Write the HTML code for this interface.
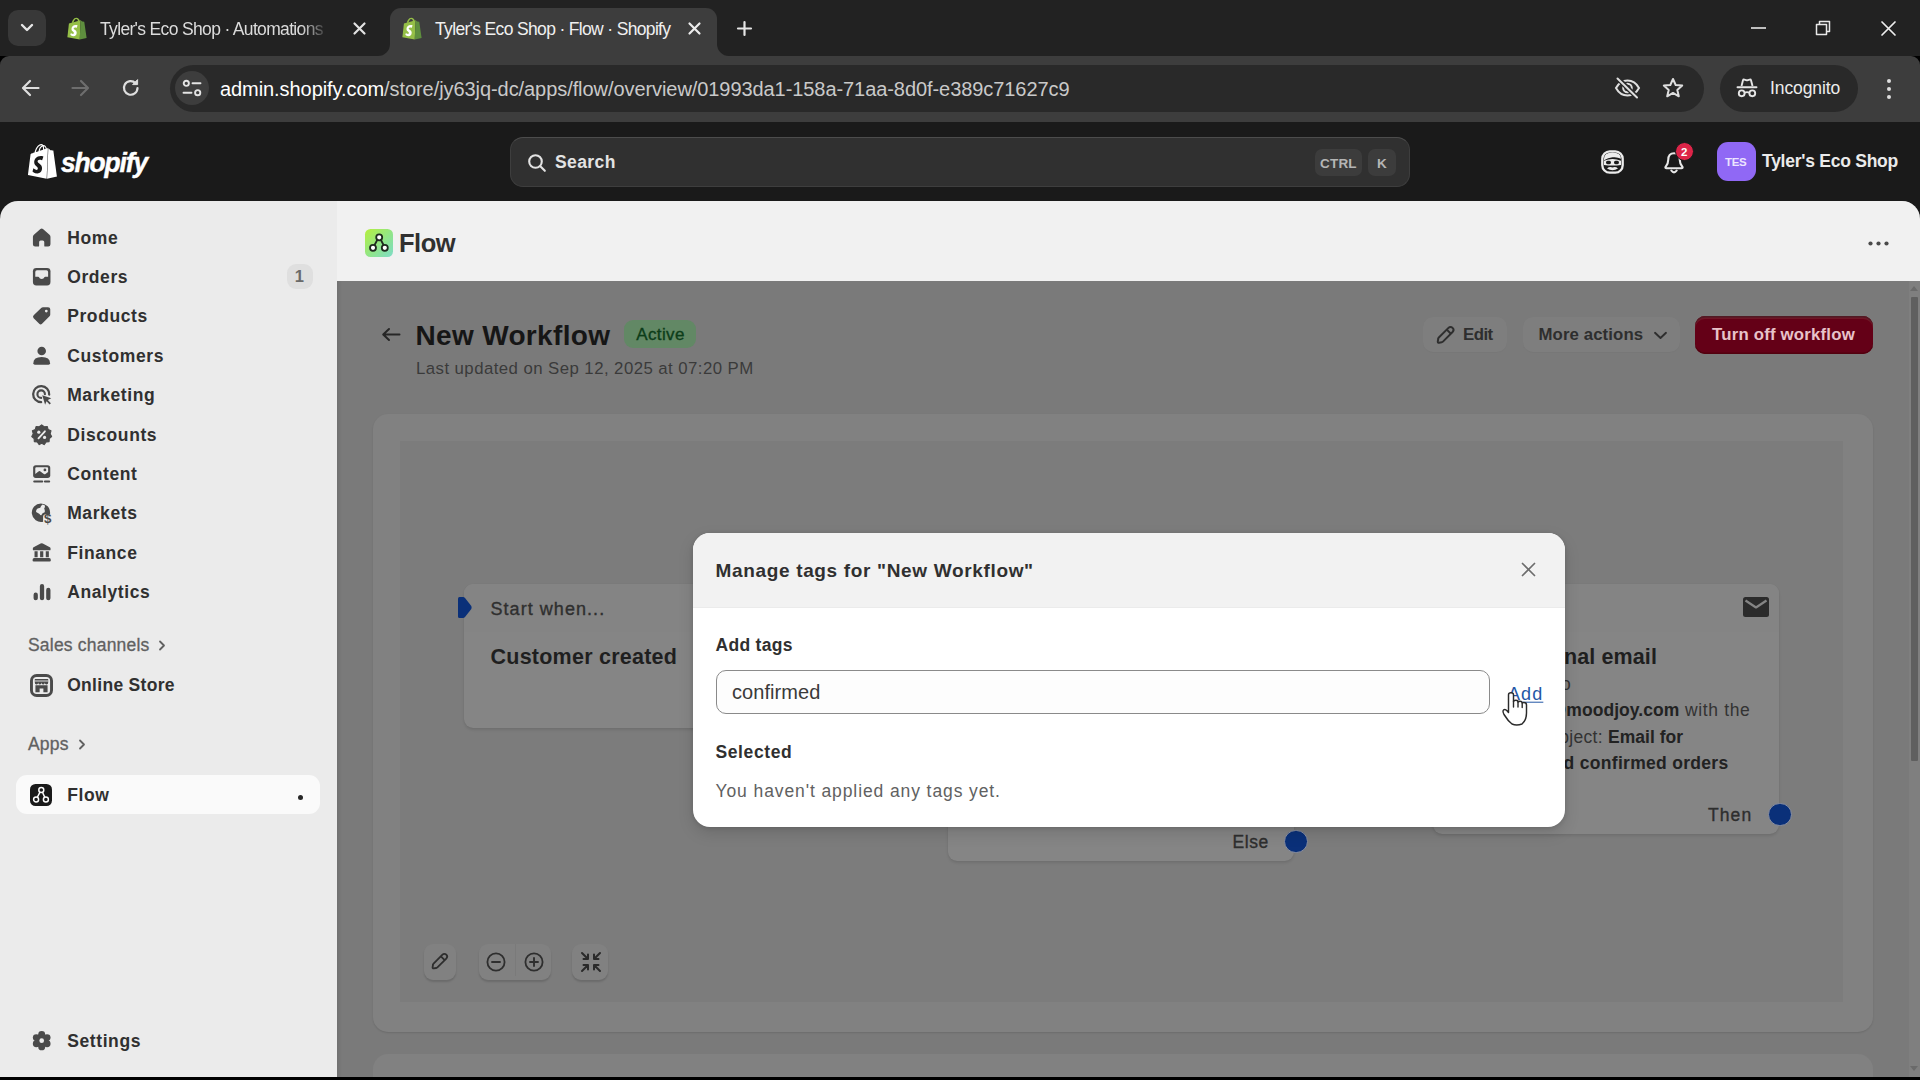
<!DOCTYPE html>
<html>
<head>
<meta charset="utf-8">
<title>Tyler's Eco Shop · Flow · Shopify</title>
<style>
*{box-sizing:border-box;margin:0;padding:0}
html,body{width:1920px;height:1080px;overflow:hidden;background:#000;font-family:"Liberation Sans",sans-serif;}
body{position:relative}
.abs{position:absolute}
.t{position:absolute;white-space:nowrap;line-height:1;transform:translateY(calc(-50% + .7px))}
svg{position:absolute;overflow:visible}
/* chrome */
#tabstrip{left:0;top:0;width:1920px;height:56px;background:#222}
#toolbar{left:0;top:56px;width:1920px;height:66px;background:#3d3d3d;border-top-left-radius:9px;border-top-right-radius:9px}
#topbar{left:0;top:122px;width:1920px;height:110px;background:#1a1a1a}
#sidebar{left:0;top:201px;width:337px;height:876px;background:#ebebeb;border-top-left-radius:18px}
#main{left:337px;top:201px;width:1583px;height:876px;background:#7a7a7a;border-top-right-radius:18px;overflow:hidden}
#mainhead{left:0;top:0;width:1583px;height:80px;background:#f1f1f1}
.nav{color:#303030;font-size:17.5px;font-weight:bold;left:67.200px;letter-spacing:.6px}
.sec{color:#616161;font-size:17.5px;left:28px;letter-spacing:.2px;-webkit-text-stroke:.3px #616161}
.med{-webkit-text-stroke:.35px currentColor}
</style>
</head>
<body>
<svg width="0" height="0" style="position:absolute"><defs>
<g id="shopbag">
<path d="M3.2 6.6 L15.9 2.9 L15 24 L1.5 21.5 Z" fill="#95bf47"/>
<path d="M15.9 2.9 L17.8 4.4 L19.9 4.6 L22.5 22.4 L15 24 Z" fill="#5e8e3e"/>
<path d="M11.2 .4 C8.2 .4 6.8 4 6.3 6 L8.2 5.5 C8.6 3.5 9.8 1.6 11.1 1.5 C12.4 1.5 13 3 13.1 4.2 L14.9 3.6 C14.5 2 13.4 .4 11.2 .4Z" fill="#95bf47"/>
<path d="M11.71 11.305s-.81-.424-1.774-.424c-1.447 0-1.504.906-1.504 1.141 0 1.232 3.24 1.715 3.24 4.629 0 2.295-1.44 3.76-3.406 3.76-2.354 0-3.54-1.465-3.54-1.465l.646-2.086s1.245 1.066 2.28 1.066c.675 0 .975-.545.975-.932 0-1.619-2.654-1.694-2.654-4.359-.034-2.237 1.571-4.416 4.827-4.416 1.257 0 1.875.361 1.875.361l-.945 2.715z" fill="#fff"/>
</g>
</defs></svg>
<!-- ============ CHROME TAB STRIP ============ -->
<div id="tabstrip" class="abs">
  <!-- tab search -->
  <div class="abs" style="left:8px;top:10px;width:38px;height:36px;border-radius:10px;background:#383838"></div>
  <svg style="left:20px;top:23px" width="14" height="10" viewBox="0 0 14 10"><path d="M2 2 L7 7 L12 2" fill="none" stroke="#e6e6e6" stroke-width="2.4" stroke-linecap="round" stroke-linejoin="round"/></svg>
  <!-- tab 1 -->
  <svg class="fav" style="left:66px;top:17px" width="22" height="23" viewBox="0 0 24 24"><use href="#shopbag"/></svg>
  <div class="t" style="left:100px;top:29px;font-size:17.5px;color:#dcdcdc;width:229px;overflow:hidden;letter-spacing:-.66px;-webkit-mask-image:linear-gradient(90deg,#000 88%,transparent 100%)">Tyler's Eco Shop · Automations</div>
  <svg style="left:353px;top:22px" width="13" height="13" viewBox="0 0 13 13"><path d="M1.5 1.5 L11.5 11.5 M11.5 1.5 L1.5 11.5" stroke="#e2e2e2" stroke-width="2.2" stroke-linecap="round"/></svg>
  <!-- tab 2 active -->
  <div class="abs" style="left:390px;top:8px;width:327px;height:48px;background:#3d3d3d;border-radius:11px 11px 0 0"></div>
  <svg style="left:378px;top:44px" width="12" height="12" viewBox="0 0 12 12"><path d="M12 0 V12 H0 A12 12 0 0 0 12 0Z" fill="#3d3d3d"/></svg>
  <svg style="left:717px;top:44px" width="12" height="12" viewBox="0 0 12 12"><path d="M0 0 V12 H12 A12 12 0 0 1 0 0Z" fill="#3d3d3d"/></svg>
  <svg class="fav" style="left:401px;top:17px" width="22" height="23" viewBox="0 0 24 24"><use href="#shopbag"/></svg>
  <div class="t" style="left:435px;top:29px;font-size:17.5px;color:#f0f0f0;letter-spacing:-.66px">Tyler's Eco Shop · Flow · Shopify</div>
  <svg style="left:688px;top:22px" width="13" height="13" viewBox="0 0 13 13"><path d="M1.5 1.5 L11.5 11.5 M11.5 1.5 L1.5 11.5" stroke="#ececec" stroke-width="2.2" stroke-linecap="round"/></svg>
  <!-- new tab -->
  <svg style="left:737px;top:21px" width="15" height="15" viewBox="0 0 15 15"><path d="M7.5 1 V14 M1 7.5 H14" stroke="#e6e6e6" stroke-width="2.2" stroke-linecap="round"/></svg>
  <!-- window controls -->
  <svg style="left:1751px;top:27px" width="15" height="2" viewBox="0 0 15 2"><path d="M0 1 H15" stroke="#e8e8e8" stroke-width="1.6"/></svg>
  <svg style="left:1815px;top:20px" width="16" height="16" viewBox="0 0 16 16"><path d="M1.5 4.5 H11.5 V14.5 H1.5 Z M4.5 4.5 V1.5 H14.5 V11.5 H11.5" fill="none" stroke="#e8e8e8" stroke-width="1.5" stroke-linejoin="round"/></svg>
  <svg style="left:1881px;top:21px" width="15" height="15" viewBox="0 0 15 15"><path d="M1 1 L14 14 M14 1 L1 14" stroke="#eeeeee" stroke-width="1.7" stroke-linecap="round"/></svg>
</div>
<!-- ============ CHROME TOOLBAR ============ -->
<div id="toolbar" class="abs">
  <!-- back -->
  <svg style="left:21px;top:23px" width="19" height="18" viewBox="0 0 19 18"><path d="M17.5 9 H2.5 M9 2 L2 9 L9 16" fill="none" stroke="#dedede" stroke-width="2.2" stroke-linecap="round" stroke-linejoin="round"/></svg>
  <!-- forward (disabled) -->
  <svg style="left:71px;top:23px" width="19" height="18" viewBox="0 0 19 18"><path d="M1.5 9 H16.5 M10 2 L17 9 L10 16" fill="none" stroke="#6e6e6e" stroke-width="2.2" stroke-linecap="round" stroke-linejoin="round"/></svg>
  <!-- reload -->
  <svg style="left:121px;top:22px" width="20" height="20" viewBox="0 0 20 20"><path d="M16.5 10 A6.8 6.8 0 1 1 14.6 5.2" fill="none" stroke="#dedede" stroke-width="2.2" stroke-linecap="round"/><path d="M11.6 6.6 H16.6 V1.6 Z" fill="#dedede" stroke="#dedede" stroke-width="1" stroke-linejoin="round"/></svg>
  <!-- omnibox -->
  <div class="abs" style="left:170px;top:8.500px;width:1534px;height:47px;border-radius:23.500px;background:#292929"></div>
  <div class="abs" style="left:175px;top:15px;width:34px;height:34px;border-radius:17px;background:#3d3d3d"></div>
  <svg style="left:182px;top:23px" width="20" height="18" viewBox="0 0 20 18"><circle cx="4.3" cy="4.3" r="2.6" fill="none" stroke="#e4e4e4" stroke-width="1.9"/><path d="M10.5 4.3 H18.5" stroke="#e4e4e4" stroke-width="1.9" stroke-linecap="round"/><circle cx="15.7" cy="13.7" r="2.6" fill="none" stroke="#e4e4e4" stroke-width="1.9"/><path d="M1.5 13.7 H9.5" stroke="#e4e4e4" stroke-width="1.9" stroke-linecap="round"/></svg>
  <div class="t" style="left:220px;top:32px;font-size:20px;color:#c9c9c9;letter-spacing:-.07px"><span style="color:#fff">admin.shopify.com</span>/store/jy63jq-dc/apps/flow/overview/01993da1-158a-71aa-8d0f-e389c71627c9</div>
  <!-- eye off -->
  <svg style="left:1614px;top:21px" width="27" height="22" viewBox="0 0 27 22"><path d="M2 11 C5 5.5 9 3.5 13.5 3.5 C18 3.5 22 5.500 25 11 C22 16.5 18 18.5 13.500 18.5 C9 18.5 5 16.5 2 11 Z" fill="none" stroke="#dedede" stroke-width="2"/><circle cx="13.5" cy="11" r="4.300" fill="none" stroke="#dedede" stroke-width="2"/><path d="M4 1.500 L23 20.500" stroke="#292929" stroke-width="5"/><path d="M3.5 1.500 L23 20.500" stroke="#dedede" stroke-width="2" stroke-linecap="round"/></svg>
  <!-- star -->
  <svg style="left:1662px;top:21px" width="22" height="21" viewBox="0 0 22 21"><path d="M11 2 L13.7 8 L20.2 8.600 L15.3 12.900 L16.800 19.300 L11 15.900 L5.200 19.300 L6.700 12.900 L1.800 8.600 L8.300 8 Z" fill="none" stroke="#dedede" stroke-width="2" stroke-linejoin="round"/></svg>
  <!-- incognito pill -->
  <div class="abs" style="left:1720px;top:8.500px;width:138px;height:47px;border-radius:23.500px;background:#292929"></div>
  <svg style="left:1736px;top:21px" width="22" height="22" viewBox="0 0 22 22"><path d="M5.500 9 L7 3.300 Q7.300 2.300 8.300 2.600 L11 3.400 L13.700 2.600 Q14.700 2.300 15 3.300 L16.500 9" fill="none" stroke="#e6e6e6" stroke-width="1.9" stroke-linejoin="round"/><path d="M1.500 10.200 H20.500" stroke="#e6e6e6" stroke-width="1.9" stroke-linecap="round"/><circle cx="5.700" cy="16.300" r="2.900" fill="none" stroke="#e6e6e6" stroke-width="1.9"/><circle cx="16.300" cy="16.300" r="2.900" fill="none" stroke="#e6e6e6" stroke-width="1.900"/><path d="M8.600 15.800 Q11 14.400 13.400 15.800" fill="none" stroke="#e6e6e6" stroke-width="1.800"/></svg>
  <div class="t" style="left:1770px;top:32px;font-size:17.5px;color:#ececec;letter-spacing:-.1px">Incognito</div>
  <!-- menu dots -->
  <svg style="left:1886px;top:22px" width="6" height="22" viewBox="0 0 6 22"><circle cx="3" cy="3" r="2" fill="#dedede"/><circle cx="3" cy="11" r="2" fill="#dedede"/><circle cx="3" cy="19" r="2" fill="#dedede"/></svg>
</div>
<!-- ============ SHOPIFY TOPBAR ============ -->
<div id="topbar" class="abs">
  <!-- logo -->
  <svg style="left:26px;top:22.300px" width="33" height="34.700" viewBox="0 0 24 24" preserveAspectRatio="none"><path fill="#fff" d="M15.337 23.979l7.216-1.561s-2.604-17.613-2.625-17.730c-.018-.116-.114-.192-.211-.192s-1.929-.136-1.929-.136-1.275-1.274-1.439-1.411c-.045-.037-.075-.057-.121-.074l-.914 21.104h.023zM11.710 11.305s-.810-.424-1.774-.424c-1.447 0-1.504.906-1.504 1.141 0 1.232 3.240 1.715 3.240 4.629 0 2.295-1.440 3.760-3.406 3.760-2.354 0-3.540-1.465-3.540-1.465l.646-2.086s1.245 1.066 2.280 1.066c.675 0 .975-.545.975-.932 0-1.619-2.654-1.694-2.654-4.359-.034-2.237 1.571-4.416 4.827-4.416 1.257 0 1.875.361 1.875.361l-.945 2.715-.020.010zM11.170.830c.136 0 .271.038.405.135-.984.465-2.064 1.639-2.508 3.992-.656.213-1.293.405-1.889.578C7.697 3.757 8.951.830 11.170.830zm1.235 2.949v.135c-.754.232-1.583.484-2.394.736.466-1.777 1.333-2.645 2.085-2.971.193.501.309 1.176.309 2.100zm.539-2.234c.694.074 1.141.867 1.429 1.755-.349.114-.735.231-1.158.366v-.252c0-.752-.096-1.371-.271-1.871v.002zm2.992 1.289c-.020 0-.060.021-.078.021s-.289.075-.714.210c-.423-1.233-1.176-2.370-2.508-2.370h-.115C12.135.209 11.669 0 11.265 0 8.159 0 6.675 3.877 6.210 5.846c-1.194.365-2.063.636-2.160.674-.675.213-.694.232-.772.870-.075.462-1.830 14.063-1.830 14.063L15.009 24l.927-21.166z"/></svg>
  <div class="t" style="left:61px;top:39.500px;font-size:28.500px;font-weight:bold;font-style:italic;color:#fff;letter-spacing:-1.2px;-webkit-text-stroke:.5px #fff;transform:translateY(calc(-50% + .7px)) scaleX(.925);transform-origin:left center">shopify</div>
  <!-- search -->
  <div class="abs" style="left:510px;top:15px;width:900px;height:50px;border-radius:13px;background:#303030;border:1px solid #3e3e3e;border-top-color:#4c4c4c"></div>
  <svg style="left:527px;top:31px" width="20" height="20" viewBox="0 0 20 20"><circle cx="8.500" cy="8.500" r="6.300" fill="none" stroke="#e3e3e3" stroke-width="2.100"/><path d="M13.300 13.300 L17.800 17.800" stroke="#e3e3e3" stroke-width="2.100" stroke-linecap="round"/></svg>
  <div class="t" style="left:555px;top:40px;font-size:17.5px;font-weight:bold;color:#e3e3e3;letter-spacing:.4px">Search</div>
  <div class="abs" style="left:1315px;top:27px;width:47px;height:27px;border-radius:7px;background:#3c3c3c"></div>
  <div class="t" style="left:1320px;top:41px;font-size:13.5px;font-weight:bold;color:#b5b5b5;letter-spacing:.2px">CTRL</div>
  <div class="abs" style="left:1368px;top:27px;width:28px;height:27px;border-radius:7px;background:#3c3c3c"></div>
  <div class="t" style="left:1377px;top:41px;font-size:13.5px;font-weight:bold;color:#b5b5b5">K</div>
  <!-- sidekick -->
  <svg style="left:1601px;top:27px" width="23" height="25" viewBox="0 0 23 25"><rect x="1.300" y="2.300" width="20.400" height="21.400" rx="7.500" fill="#1a1a1a" stroke="#ececec" stroke-width="2.300"/><path d="M3 9.800 Q3 3.500 11.500 3.500 Q20 3.500 20 9.800 Q16 7.600 11.500 8.300 Q7 9 3 11.200Z" fill="#ececec"/><path d="M3 11.800 Q11.500 8.300 20 11.800 V16 Q11.500 17 3 16Z" fill="#ececec"/><rect x="5" y="11.800" width="5" height="3.400" rx="1.600" fill="#1a1a1a"/><rect x="13" y="11.800" width="5" height="3.400" rx="1.600" fill="#1a1a1a"/><path d="M6 19.500 Q8.500 17.200 11.500 18.500 Q14.500 17.200 17 19.500 Q11.500 22.800 6 19.500Z" fill="#ececec"/></svg>
  <!-- bell -->
  <svg style="left:1663px;top:29px" width="22" height="24" viewBox="0 0 22 24"><path d="M11 2.200 C7.200 2.200 5.300 5 5.300 8.500 C5.300 12.500 4 14 2.500 16 Q2 17.300 3.500 17.300 H18.500 Q20 17.300 19.500 16 C18 14 16.700 12.500 16.700 8.500 C16.700 5 14.800 2.200 11 2.200Z" fill="none" stroke="#e8e8e8" stroke-width="2.100" stroke-linejoin="round"/><path d="M8.300 19.500 Q11 23.300 13.700 19.500" fill="none" stroke="#e8e8e8" stroke-width="2.100" stroke-linecap="round"/></svg>
  <div class="abs" style="left:1675px;top:20px;width:19px;height:19px;border-radius:10px;background:#dd2448;border:1.500px solid #1a1a1a"></div>
  <div class="t" style="left:1681px;top:30px;font-size:11.500px;font-weight:bold;color:#fff">2</div>
  <!-- avatar -->
  <div class="abs" style="left:1717px;top:20px;width:39px;height:39px;border-radius:11px;background:#9068f5"></div>
  <div class="t" style="left:1725px;top:40px;font-size:11.500px;font-weight:bold;color:#ece4ff;letter-spacing:-.3px">TES</div>
  <div class="t" style="left:1762px;top:39px;font-size:17.500px;font-weight:bold;color:#ebebeb;letter-spacing:-.25px">Tyler's Eco Shop</div>
</div>
<!-- ============ SIDEBAR ============ -->
<div id="sidebar" class="abs">
  <svg style="left:31.400px;top:26.3px" width="21.400" height="21.400" viewBox="0 0 20 20"><path d="M10 1.300 Q10.600 1.300 11.200 1.800 L17.300 7.200 Q18.200 8 18.200 9.200 V16.200 Q18.200 18.300 16.100 18.300 H13.200 Q12.400 18.300 12.400 17.500 V14 Q12.400 12.600 11 12.600 H9 Q7.600 12.600 7.600 14 V17.500 Q7.600 18.300 6.800 18.300 H3.900 Q1.800 18.300 1.800 16.200 V9.200 Q1.800 8 2.700 7.200 L8.800 1.800 Q9.400 1.300 10 1.300Z" fill="#4a4a4a"/></svg>
  <div class="t nav" style="top:37px">Home</div>
  <svg style="left:31.400px;top:65.3px" width="21.400" height="21.400" viewBox="0 0 20 20"><path d="M5 1.800 H15 Q18.200 1.800 18.200 5 V15 Q18.200 18.200 15 18.200 H5 Q1.800 18.200 1.800 15 V5 Q1.800 1.800 5 1.800Z" fill="#4a4a4a"/><path d="M5.600 4 H14.400 Q16 4 16 5.600 V10 H13.300 Q12.700 10 12.500 10.600 Q12 12.200 10 12.200 Q8 12.200 7.500 10.600 Q7.300 10 6.700 10 H4 V5.600 Q4 4 5.600 4Z" fill="#ebebeb"/></svg>
  <div class="t nav" style="top:76px">Orders</div>
  <svg style="left:31.400px;top:104.3px" width="21.400" height="21.400" viewBox="0 0 20 20"><path d="M11.200 2 H16 Q18 2 18 4 V8.800 Q18 9.800 17.300 10.500 L10.300 17.500 Q9 18.800 7.700 17.500 L2.500 12.300 Q1.200 11 2.500 9.700 L9.500 2.700 Q10.200 2 11.200 2Z" fill="#4a4a4a"/><circle cx="14.300" cy="5.700" r="1.300" fill="#ebebeb"/></svg>
  <div class="t nav" style="top:115px">Products</div>
  <svg style="left:31.400px;top:144.3px" width="21.400" height="21.400" viewBox="0 0 20 20"><circle cx="10" cy="5.600" r="4" fill="#4a4a4a"/><path d="M2.200 17 Q2.200 11.300 10 11.300 Q17.800 11.300 17.800 17 Q17.800 18.400 16.400 18.400 H3.600 Q2.200 18.400 2.200 17Z" fill="#4a4a4a"/></svg>
  <div class="t nav" style="top:155px">Customers</div>
  <svg style="left:31.400px;top:183.3px" width="21.400" height="21.400" viewBox="0 0 20 20"><path d="M17 10 A7.500 7.500 0 1 0 9.500 17" fill="none" stroke="#4a4a4a" stroke-width="2.100" stroke-linecap="round"/><path d="M13 9.500 A3.500 3.500 0 1 0 9.500 13" fill="none" stroke="#4a4a4a" stroke-width="2" stroke-linecap="round"/><path d="M10.500 10.500 L19 13.400 L15.700 15 L18.600 18 L17.400 19.200 L14.500 16.200 L13.200 19.300 Z" fill="#4a4a4a"/></svg>
  <div class="t nav" style="top:194px">Marketing</div>
  <svg style="left:31.400px;top:223.3px" width="21.400" height="21.400" viewBox="0 0 20 20"><path d="M10 .8 L12.300 2.600 L15.200 2.300 L16 5.100 L18.700 6.300 L17.900 9.100 L19.300 11.700 L17.100 13.600 L16.900 16.500 L14 16.900 L12.300 19.300 L10 18 L7.700 19.300 L6 16.900 L3.100 16.500 L2.900 13.600 L.7 11.700 L2.100 9.100 L1.300 6.300 L4 5.100 L4.800 2.300 L7.700 2.600 Z" fill="#4a4a4a" stroke="#4a4a4a" stroke-width="1" stroke-linejoin="round"/><circle cx="7.300" cy="7.600" r="1.500" fill="#ebebeb"/><circle cx="12.700" cy="12.600" r="1.500" fill="#ebebeb"/><path d="M13 6.800 L7 13.400" stroke="#ebebeb" stroke-width="1.700" stroke-linecap="round"/></svg>
  <div class="t nav" style="top:234px">Discounts</div>
  <svg style="left:31.400px;top:262.3px" width="21.400" height="21.400" viewBox="0 0 20 20"><path d="M4.500 2 H15.500 Q18 2 18 4.500 V11.500 Q18 14 15.500 14 H4.500 Q2 14 2 11.500 V4.500 Q2 2 4.500 2Z" fill="#4a4a4a"/><path d="M5 4 H15 Q16 4 16 5 V8.500 L13.500 10.200 Q12.800 10.700 12 10.200 L8.500 7.800 Q7.700 7.300 7 7.900 L4 10.300 V5 Q4 4 5 4Z" fill="#ebebeb"/><circle cx="13" cy="6.500" r="1.300" fill="#4a4a4a"/><path d="M3 17.300 H10.500 M13 17.300 H17" stroke="#4a4a4a" stroke-width="1.900" stroke-linecap="round"/></svg>
  <div class="t nav" style="top:273px">Content</div>
  <svg style="left:31.400px;top:301.3px" width="21.400" height="21.400" viewBox="0 0 20 20"><path d="M9.300 1.300 A8.700 8.700 0 1 0 11.300 18.500 V14 Q11.300 11.500 14 11.500 H17.800 Q18.300 7 15.600 4 Q12.800 1.300 9.300 1.300Z" fill="#4a4a4a"/><path d="M10.800 2.300 Q9 3.600 8.700 5.400 L6.200 6 Q4.400 7.300 4.800 9.300 L8 11.200 Q8.300 12.300 9.600 12.400 Q10.500 10.300 12.800 9.600 Q13.200 7.500 12.300 6 Q13.500 4.800 12.800 3 Z" fill="#ebebeb"/><text x="12.200" y="19.800" font-family="Liberation Sans" font-weight="bold" font-size="12.500" fill="#4a4a4a">$</text></svg>
  <div class="t nav" style="top:312px">Markets</div>
  <svg style="left:31.400px;top:341.3px" width="21.400" height="21.400" viewBox="0 0 20 20"><path d="M10 1.200 Q10.500 1.200 11 1.500 L17.600 5 Q18.300 5.400 18.300 6.200 V7 Q18.300 7.800 17.500 7.800 H2.500 Q1.700 7.800 1.700 7 V6.200 Q1.700 5.400 2.400 5 L9 1.500 Q9.500 1.200 10 1.200Z" fill="#4a4a4a"/><path d="M3.300 8.600 H6.200 V14.300 H3.300Z M8.500 8.600 H11.500 V14.300 H8.500Z M13.800 8.600 H16.700 V14.300 H13.800Z" fill="#4a4a4a"/><path d="M3 15 H17 Q18.500 15 18.500 16.500 V17.300 Q18.500 18.300 17.500 18.300 H2.500 Q1.500 18.300 1.500 17.300 V16.500 Q1.500 15 3 15Z" fill="#4a4a4a"/></svg>
  <div class="t nav" style="top:352px">Finance</div>
  <svg style="left:31.400px;top:380.3px" width="21.400" height="21.400" viewBox="0 0 20 20"><path d="M4.400 12.800 V16.100 M10.300 4.800 V16.100 M16.200 8.300 V16.100" stroke="#4a4a4a" stroke-width="4" stroke-linecap="round"/></svg>
  <div class="t nav" style="top:391px">Analytics</div>
  <div class="abs" style="left:286.500px;top:63px;width:26px;height:24.500px;border-radius:9px;background:#dfdfdf"></div>
  <div class="t" style="left:294.800px;top:75px;font-size:16.500px;font-weight:bold;color:#6a6a6a">1</div>
  <div class="t sec" style="top:444px">Sales channels</div>
  <svg style="left:158px;top:439px" width="8" height="11" viewBox="0 0 8 11"><path d="M2 1.500 L6 5.500 L2 9.500" fill="none" stroke="#616161" stroke-width="1.800" stroke-linecap="round" stroke-linejoin="round"/></svg>
  <svg style="left:30px;top:472.500px" width="23" height="23" viewBox="0 0 22 22"><rect x="1.400" y="1.400" width="19.200" height="19.200" rx="5" fill="none" stroke="#4a4a4a" stroke-width="2.800"/><path d="M4.600 4.800 H17.400 V8.200 Q17.400 10 15.800 10 Q14.200 10 14.200 8.200 Q14.200 10 12.600 10 Q11 10 11 8.200 Q11 10 9.400 10 Q7.800 10 7.800 8.200 Q7.800 10 6.200 10 Q4.600 10 4.600 8.200Z" fill="#4a4a4a"/><path d="M5.200 10.800 H16.800 V17.400 H12.800 V13.800 H9.200 V17.400 H5.200Z" fill="#4a4a4a"/><path d="M4.600 6.700 H17.400" stroke="#ebebeb" stroke-width=".9"/></svg>
  <div class="t nav" style="top:484px;letter-spacing:.3px">Online Store</div>
  <div class="t sec" style="top:543px">Apps</div>
  <svg style="left:78px;top:538px" width="8" height="11" viewBox="0 0 8 11"><path d="M2 1.500 L6 5.500 L2 9.500" fill="none" stroke="#616161" stroke-width="1.800" stroke-linecap="round" stroke-linejoin="round"/></svg>
  <div class="abs" style="left:16px;top:574px;width:304px;height:39px;border-radius:11px;background:#fafafa"></div>
  <svg style="left:30px;top:583px" width="22" height="22" viewBox="0 0 22 22"><rect x="0" y="0" width="22" height="22" rx="5.500" fill="#1a1a1a"/><g fill="none" stroke="#fff" stroke-width="1.450"><circle cx="11.300" cy="6" r="2.500"/><circle cx="6.100" cy="15.500" r="2.500"/><circle cx="15.900" cy="15.500" r="2.500"/><path d="M10 8.200 L7.400 13.200 M12.500 8.300 L14.700 13.100"/></g></svg>
  <div class="t nav" style="top:594px">Flow</div>
  <div class="abs" style="left:297.500px;top:593.500px;width:5px;height:5px;border-radius:3px;background:#262626"></div>
  <svg style="left:30.800px;top:828.600px" width="21.400" height="21.400" viewBox="0 0 21 21"><g fill="#4a4a4a"><circle cx="10.500" cy="10.500" r="6.800"/><circle cx="10.50" cy="4.40" r="3.400"/><circle cx="5.22" cy="7.45" r="3.400"/><circle cx="5.22" cy="13.55" r="3.400"/><circle cx="10.50" cy="16.60" r="3.400"/><circle cx="15.78" cy="13.55" r="3.400"/><circle cx="15.78" cy="7.45" r="3.400"/></g><circle cx="10.500" cy="10.500" r="2.300" fill="#ebebeb"/></svg>
  <div class="t nav" style="top:840px">Settings</div>
</div>
<!-- ============ MAIN ============ -->
<div id="main" class="abs">
  <div id="mainhead" class="abs"></div>
  <div class="abs" style="left:0;top:80px;width:5px;height:800px;background:linear-gradient(90deg,#707070,#7a7a7a)"></div>
  <svg style="left:28px;top:28px" width="28" height="28" viewBox="0 0 28 28"><defs><linearGradient id="fg" x1="0" y1="0" x2="1" y2="1"><stop offset="0" stop-color="#b5ef3e"/><stop offset=".55" stop-color="#90e58a"/><stop offset="1" stop-color="#7edcc8"/></linearGradient></defs><rect width="28" height="28" rx="5.500" fill="url(#fg)"/><g fill="#fff" stroke="#1f2a1f" stroke-width="1.800"><path d="M12.500 10.500 L9.300 16.500 M15.700 10.500 L18.500 16" fill="none"/><circle cx="14.200" cy="8.300" r="3"/><circle cx="8" cy="18.800" r="3"/><circle cx="19.800" cy="18.800" r="3"/></g></svg>
  <div class="t" style="left:62px;top:42px;font-size:25.500px;font-weight:bold;color:#303030;letter-spacing:-.5px">Flow</div>
  <svg style="left:1531px;top:40px" width="21" height="5" viewBox="0 0 21 5"><circle cx="2.500" cy="2.500" r="2.100" fill="#4a4a4a"/><circle cx="10.500" cy="2.500" r="2.100" fill="#4a4a4a"/><circle cx="18.500" cy="2.500" r="2.100" fill="#4a4a4a"/></svg>
  <svg style="left:44px;top:126px" width="20" height="15" viewBox="0 0 20 15"><path d="M18.500 7.500 H2.500 M8 2 L2.200 7.500 L8 13" fill="none" stroke="#262626" stroke-width="2" stroke-linecap="round" stroke-linejoin="round"/></svg>
  <div class="t" style="left:78.5px;top:133.5px;font-size:28px;font-weight:bold;color:#161616;letter-spacing:.33px">New Workflow</div>
  <div class="abs" style="left:286.8px;top:118.700px;width:72.500px;height:28.600px;border-radius:9px;background:#628865"></div>
  <div class="t med" style="left:299.300px;top:132.900px;font-size:17px;color:#0c3d19;letter-spacing:.35px">Active</div>
  <div class="t" style="left:79px;top:167.5px;font-size:16.800px;color:#3a3a3a;letter-spacing:.44px">Last updated on Sep 12, 2025 at 07:20 PM</div>
  <div class="abs" style="left:1086px;top:116px;width:84px;height:36px;border-radius:10px;background:#7e7e7e;box-shadow:inset 0 -1px 0 #777"></div>
  <svg style="left:1098px;top:123.500px" width="20.500" height="20.500" viewBox="0 0 19 19"><g transform="rotate(45 9.500 9.500)" fill="none" stroke="#2e2e2e" stroke-width="1.800" stroke-linejoin="round"><path d="M6.800 2.600 A2.700 2.700 0 0 1 12.200 2.600 V15.200 Q12.200 15.900 11.800 16.400 L10.300 18.500 Q9.500 19.400 8.700 18.500 L7.200 16.400 Q6.800 15.900 6.800 15.200 Z"/><path d="M6.800 4.800 H12.200"/></g></svg>
  <div class="t" style="left:1126px;top:133.5px;font-size:16.800px;font-weight:bold;color:#2e2e2e;letter-spacing:-.5px">Edit</div>
  <div class="abs" style="left:1186px;top:116px;width:157px;height:36px;border-radius:10px;background:#7e7e7e;box-shadow:inset 0 -1px 0 #777"></div>
  <div class="t" style="left:1201.5px;top:133.5px;font-size:16.800px;font-weight:bold;color:#2e2e2e;letter-spacing:.1px">More actions</div>
  <svg style="left:1316px;top:130px" width="15" height="9" viewBox="0 0 15 9"><path d="M2 1.800 L7.500 7 L13 1.800" fill="none" stroke="#2e2e2e" stroke-width="1.900" stroke-linecap="round" stroke-linejoin="round"/></svg>
  <div class="abs" style="left:1357.5px;top:114.5px;width:178.500px;height:38.500px;border-radius:10px;background:#640017;box-shadow:inset 0 1.500px 0 #511a24, inset 0 3px 0 #6f1626, inset 0 -1.500px 0 #52010f"></div>
  <div class="t" style="left:1375px;top:133.5px;font-size:16.800px;font-weight:bold;color:#e8c3ca;letter-spacing:.2px">Turn off workflow</div>
  <div class="abs" style="left:35.5px;top:213px;width:1500px;height:618px;border-radius:15px;background:#818181;box-shadow:0 1px 2px rgba(0,0,0,.12)"></div>
  <div class="abs" id="canvas" style="left:63px;top:239.5px;width:1443px;height:561.500px;background:#7c7c7c"></div>
  <div class="abs" style="left:127px;top:382.5px;width:346px;height:144px;border-radius:9px;background:#858585;box-shadow:0 2px 3px rgba(0,0,0,.10),0 0 1px rgba(0,0,0,.08)"></div>
  <div class="abs" style="left:127px;top:382.5px;width:346px;height:48px;border-radius:9px 9px 0 0;background:#848484"></div>
  <svg style="left:120.5px;top:395.5px" width="14" height="21" viewBox="0 0 14 21"><path d="M1.500 0 H5 Q6.200 0 7 .9 L13.300 9 Q14 10.500 13.300 12 L7 20.100 Q6.200 21 5 21 H1.500 Q0 21 0 19.500 V1.500 Q0 0 1.500 0Z" fill="#0a3079"/></svg>
  <div class="t med" style="left:153.5px;top:406.5px;font-size:18px;color:#2f2f2f;letter-spacing:1.05px">Start when...</div>
  <div class="t" style="left:153.5px;top:455.5px;font-size:21.500px;font-weight:bold;color:#1f1f1f;letter-spacing:.24px">Customer created</div>
  <div class="abs" style="left:611px;top:359px;width:346px;height:301px;border-radius:9px;background:#858585;box-shadow:0 2px 3px rgba(0,0,0,.10),0 0 1px rgba(0,0,0,.08)"></div>
  <div class="t med" style="left:895.5px;top:640.5px;font-size:17.500px;color:#2e2e2e;letter-spacing:.6px">Else</div>
  <div class="abs" style="left:947.3px;top:628.7px;width:23.500px;height:23.500px;border-radius:13px;background:#0a3079;border:1.500px solid #8b90a0"></div>
  <div class="abs" style="left:1096px;top:382.5px;width:346px;height:250px;border-radius:9px;background:#858585;box-shadow:0 2px 3px rgba(0,0,0,.10),0 0 1px rgba(0,0,0,.08)"></div>
  <div class="abs" style="left:1096px;top:382.5px;width:346px;height:48px;border-radius:9px 9px 0 0;background:#848484"></div>
  <svg style="left:1405.5px;top:396px" width="26" height="20" viewBox="0 0 26 20"><path d="M2.500 0 H23.500 Q26 0 26 2.500 V17.500 Q26 20 23.500 20 H2.500 Q0 20 0 17.500 V2.500 Q0 0 2.500 0Z" fill="#2b2b2b"/><path d="M2.500 3.500 L13 10.500 L23.500 3.500" fill="none" stroke="#858585" stroke-width="2.200" stroke-linejoin="round"/></svg>
  <div class="t" style="right:263px;top:455.5px;font-size:21.500px;font-weight:bold;color:#1f1f1f;letter-spacing:.1px">Send internal email</div>
  <div class="t" style="right:349px;top:483px;font-size:17.500px;color:#333;letter-spacing:.3px">Send email to</div>
  <div class="t" style="right:169.5px;top:509px;font-size:17.500px;color:#333;letter-spacing:.3px"><b style="color:#222;letter-spacing:.05px">tyler@moodjoy.com</b><span style="letter-spacing:.66px"> with the</span></div>
  <div class="t" style="right:237px;top:535.5px;font-size:17.500px;color:#333;letter-spacing:.3px">subject: <b style="color:#222;letter-spacing:0">Email for</b></div>
  <div class="t" style="right:191.500px;top:562px;font-size:17.500px;color:#222;font-weight:bold;letter-spacing:.3px">paid confirmed orders</div>
  <div class="t med" style="left:1371px;top:613.5px;font-size:17.500px;color:#2e2e2e;letter-spacing:1.1px">Then</div>
  <div class="abs" style="left:1431.3px;top:601.7px;width:23.500px;height:23.500px;border-radius:13px;background:#0a3079;border:1.500px solid #8b90a0"></div>
  <div class="abs" style="left:86.5px;top:743px;width:32.500px;height:36px;border-radius:9px;background:#818181;box-shadow:0 2px 2px rgba(0,0,0,.14)"></div>
  <svg style="left:93px;top:751px" width="19" height="19" viewBox="0 0 19 19"><g transform="rotate(45 9.500 9.500)" fill="none" stroke="#2e2e2e" stroke-width="1.800" stroke-linejoin="round"><path d="M6.800 2.600 A2.700 2.700 0 0 1 12.200 2.600 V15.200 Q12.200 15.900 11.800 16.400 L10.300 18.500 Q9.500 19.400 8.700 18.500 L7.200 16.400 Q6.800 15.900 6.800 15.200 Z"/><path d="M6.800 4.800 H12.200"/></g></svg>
  <div class="abs" style="left:142px;top:743px;width:72px;height:36px;border-radius:9px;background:#818181;box-shadow:0 2px 2px rgba(0,0,0,.14)"></div>
  <div class="abs" style="left:177.5px;top:743px;width:1px;height:32px;background:#7a7a7a"></div>
  <svg style="left:148.8px;top:751px" width="20" height="20" viewBox="0 0 20 20"><circle cx="10" cy="10" r="8.600" fill="none" stroke="#2e2e2e" stroke-width="1.800"/><path d="M6 10 H14" stroke="#2e2e2e" stroke-width="1.900" stroke-linecap="round"/></svg>
  <svg style="left:187px;top:751px" width="20" height="20" viewBox="0 0 20 20"><circle cx="10" cy="10" r="8.600" fill="none" stroke="#2e2e2e" stroke-width="1.800"/><path d="M6 10 H14 M10 6 V14" stroke="#2e2e2e" stroke-width="1.900" stroke-linecap="round"/></svg>
  <div class="abs" style="left:235px;top:743px;width:36px;height:36px;border-radius:9px;background:#818181;box-shadow:0 2px 2px rgba(0,0,0,.14)"></div>
  <svg style="left:242.5px;top:750px" width="22" height="22" viewBox="0 0 22 22"><g fill="none" stroke="#2a2a2a" stroke-width="2" stroke-linecap="round" stroke-linejoin="round"><path d="M2 2 L8 8 M8 3.500 V8 H3.500"/><path d="M20 2 L14 8 M14 3.500 V8 H18.500"/><path d="M2 20 L8 14 M8 18.500 V14 H3.500"/><path d="M20 20 L14 14 M14 18.500 V14 H18.500"/></g></svg>
  <div class="abs" style="left:35.5px;top:853px;width:1500px;height:60px;border-radius:15px;background:#818181"></div>
  <div class="abs" style="left:1571.5px;top:80px;width:12px;height:800px;background:#7f7f7f"></div>
  <div class="abs" style="left:1573.5px;top:96px;width:7px;height:464px;background:#5f5f5f;border-radius:1px"></div>
  <svg style="left:1573px;top:85px" width="8" height="5" viewBox="0 0 8 5"><path d="M0 5 L4 0 L8 5Z" fill="#6a6a6a"/></svg>
  <svg style="left:1573px;top:865px" width="8" height="5" viewBox="0 0 8 5"><path d="M0 0 L4 5 L8 0Z" fill="#6a6a6a"/></svg>
</div>
<!-- ============ MODAL ============ -->
<div id="modal" class="abs" style="left:693px;top:533px;width:872px;height:293.500px;border-radius:17px;background:#fff;overflow:hidden;box-shadow:0 6px 16px rgba(0,0,0,.13),0 1px 4px rgba(0,0,0,.12)">
  <div class="abs" style="left:0;top:0;width:872px;height:75px;background:#f2f2f2;border-bottom:1px solid #ebebeb"></div>
  <div class="t" style="left:22.500px;top:36.500px;font-size:19px;font-weight:bold;color:#303030;letter-spacing:.66px">Manage tags for "New Workflow"</div>
  <svg style="left:827.500px;top:29px" width="15" height="15" viewBox="0 0 15 15"><path d="M1.500 1.500 L13.500 13.500 M13.500 1.500 L1.500 13.500" stroke="#6d6d6d" stroke-width="1.700" stroke-linecap="round"/></svg>
  <div class="t" style="left:22.500px;top:112px;font-size:17.500px;font-weight:bold;color:#303030;letter-spacing:.3px">Add tags</div>
  <div class="abs" style="left:22.500px;top:137px;width:774px;height:44px;border-radius:10px;background:#fdfdfd;border:1.300px solid #8a8a8a"></div>
  <div class="t" style="left:39px;top:158px;font-size:20px;color:#3a3a3a;letter-spacing:.06px">confirmed</div>
  <div class="t" style="left:815px;top:159.500px;font-size:18px;color:#2457a6;letter-spacing:1.1px;text-decoration:underline;text-underline-offset:2.200px;text-decoration-thickness:1.400px">Add</div>
  <div class="t" style="left:22.500px;top:218.500px;font-size:17.500px;font-weight:bold;color:#303030;letter-spacing:.6px">Selected</div>
  <div class="t" style="left:22.500px;top:258px;font-size:17.500px;color:#616161;letter-spacing:.9px">You haven't applied any tags yet.</div>
</div>
<!-- cursor -->
<svg style="left:1502px;top:692px" width="26" height="34" viewBox="0 0 26 34"><path d="M6.500 2.800 Q6.500 .800 9 .800 Q11.500 .800 11.500 2.800 V9.500 Q11.800 8.300 13.800 8.300 Q16 8.300 16 10 Q16.500 9.300 18 9.300 Q20 9.300 20.200 11 Q20.800 10.500 22 10.500 Q24.500 10.500 24.500 13 V21 Q24.500 28 20 32 Q14.500 33.800 10 32 Q6 29 2 22.500 Q.200 19 1.700 17.800 Q3.300 16.800 5 18.800 L6.500 20.500 Z" fill="#fff" stroke="#2b2b2b" stroke-width="1.450" stroke-linejoin="round"/><path d="M11.500 9.500 V15 M16 10 V15 M20.200 11 V15.500" stroke="#2b2b2b" stroke-width="1.400" stroke-linecap="round"/></svg>
</body>
</html>
